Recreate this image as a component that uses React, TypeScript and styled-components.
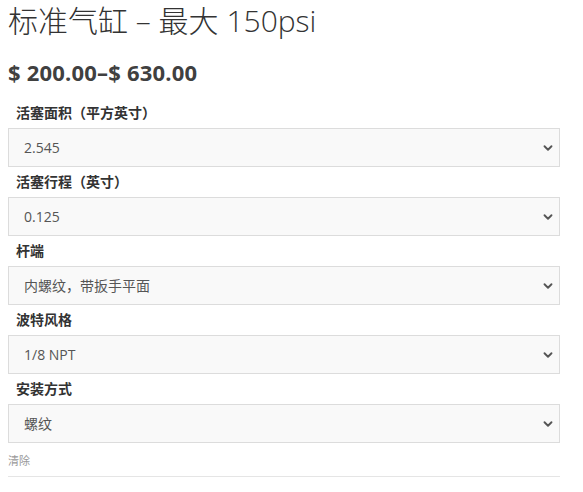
import React from "react";
import styled, { createGlobalStyle } from "styled-components";
import { ChevronDown } from "lucide-react";

const GlobalStyle = createGlobalStyle`
  body {
    margin: 0;
    background: #fff;
    font-family: "Open Sans", "Noto Sans CJK SC", sans-serif;
    color: #333;
  }
`;

const Page = styled.div`
  width: 552px;
  padding: 0 8px;
`;

const Title = styled.h1`
  margin: 0;
  padding-top: 1px;
  font-size: 30px;
  font-weight: 300;
  line-height: 40px;
  color: #333;
`;

const Price = styled.p`
  margin: 16px 0 11px;
  font-size: 22px;
  font-weight: 700;
  letter-spacing: 0.2px;
  line-height: 30px;
  color: #404040;
`;

const Field = styled.div`
  display: flex;
  flex-direction: column;
`;

const Label = styled.label`
  padding: 0 8px;
  height: 30px;
  line-height: 30px;
  font-size: 14px;
  font-weight: 700;
  color: #333;
`;

const SelectWrap = styled.div`
  position: relative;
`;

const Select = styled.select`
  display: block;
  width: 100%;
  height: 39px;
  box-sizing: border-box;
  padding: 0 30px 0 15px;
  appearance: none;
  border: 1px solid #dcdcdc;
  border-radius: 0;
  background: #f9f9f9;
  font-family: "Open Sans", "Noto Sans CJK SC", sans-serif;
  font-size: 14px;
  color: #555;
  outline: none;
`;

const Chevron = styled(ChevronDown)`
  position: absolute;
  right: 5px;
  top: 13px;
  color: #555;
  pointer-events: none;
`;

const Reset = styled.a`
  display: block;
  margin-top: 10px;
  font-size: 11px;
  line-height: 15px;
  color: #999;
  text-decoration: none;
`;

const Divider = styled.hr`
  margin: 8px 0 0;
  border: 0;
  border-top: 1px solid #e5e5e5;
`;

const fields = [
  { label: "活塞面积（平方英寸）", value: "2.545" },
  { label: "活塞行程（英寸）", value: "0.125" },
  { label: "杆端", value: "内螺纹，带扳手平面" },
  { label: "波特风格", value: "1/8 NPT" },
  { label: "安装方式", value: "螺纹" },
];

export default function App() {
  return (
    <Page>
      <GlobalStyle />
      <Title>标准气缸 – 最大 150psi</Title>
      <Price>$ 200.00–$ 630.00</Price>
      {fields.map((f) => (
        <Field key={f.label}>
          <Label>{f.label}</Label>
          <SelectWrap>
            <Select defaultValue={f.value}>
              <option>{f.value}</option>
            </Select>
            <Chevron size={14} strokeWidth={3.2} />
          </SelectWrap>
        </Field>
      ))}
      <Reset href="#">清除</Reset>
      <Divider />
    </Page>
  );
}
